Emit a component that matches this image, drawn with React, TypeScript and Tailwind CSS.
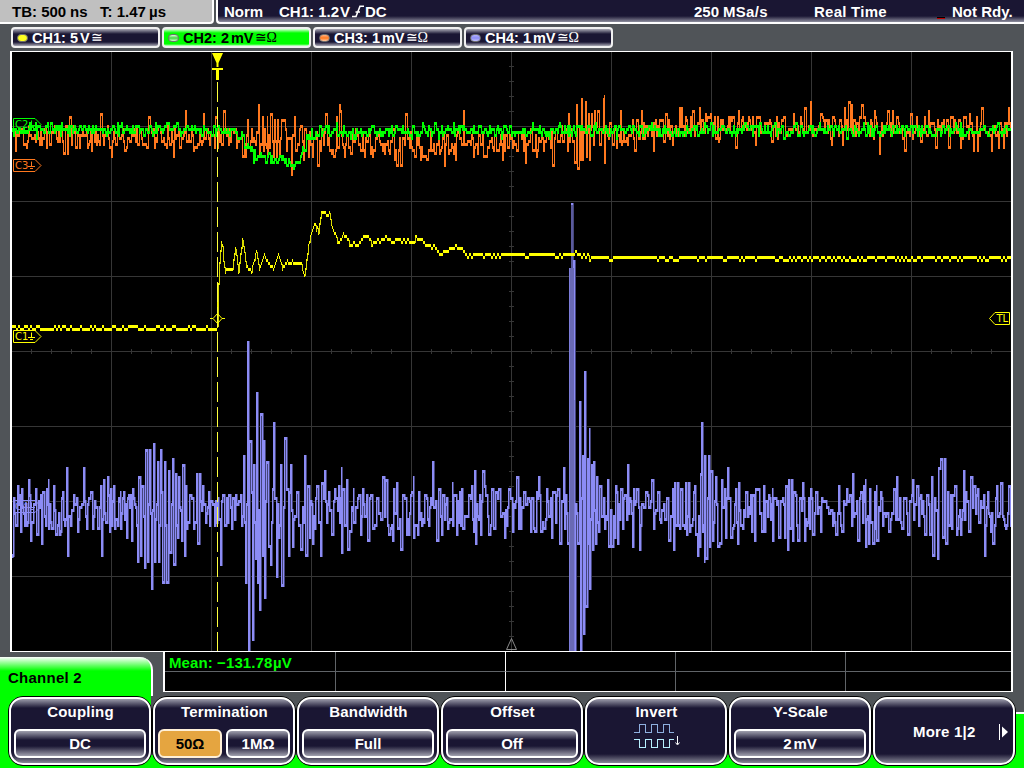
import type { ReactNode } from 'react';

type Pt = [number, number];

const parse = (s: string): Pt[] =>
  s.trim().split(/\s+/).map((p) => p.split(',').map(Number) as Pt);

const random = (seed: number) => {
  let s = seed;
  return () => {
    s = (s * 1664525 + 1013904223) % 4294967296;
    return s / 4294967296;
  };
};

const lerpAt = (pts: Pt[], x: number) => {
  if (x <= pts[0][0]) return pts[0][1];
  for (let i = 1; i < pts.length; i++) {
    if (x <= pts[i][0]) {
      const [x0, y0] = pts[i - 1];
      const [x1, y1] = pts[i];
      return x1 === x0 ? y1 : y0 + ((y1 - y0) * (x - x0)) / (x1 - x0);
    }
  }
  return pts[pts.length - 1][1];
};

/* Fill sparse stretches between measured extremes with noise around a centre line. */
const densify = (pts: Pt[], center: (x: number) => number, amp: number, seed: number) => {
  const rnd = random(seed);
  const out: Pt[] = [];
  pts.forEach((p, i) => {
    out.push(p);
    const next = pts[i + 1];
    if (!next) return;
    for (let x = p[0] + 1 + (rnd() < 0.4 ? 1 : 0); x < next[0]; x += rnd() < 0.65 ? 1 : 2) {
      out.push([x, center(x) + (rnd() * 2 - 1) * amp]);
    }
  });
  return out;
};

/* One vertical bar per sample, spanning from the previous level to the new one. */
const columns = (pts: Pt[]) => {
  let d = '';
  let prev = pts[0][1];
  pts.forEach(([x, y], i) => {
    const q = Math.round(y / 3) * 3;
    d += `M${x + 0.5} ${Math.min(prev, q) - 1}V${Math.max(prev, q) + 2}`;
    const next = pts[i + 1];
    if (next) for (let k = x + 1; k < next[0]; k++) d += `M${k + 0.5} ${q - 1}v3`;
    prev = q;
  });
  return d;
};

const ch4 = parse(`12,556 13,499 15,525 17,487 20,531 21,490 24,525 25,505 26,525 28,481 30,541 31,523 33,505 35,490 36,534 38,502 41,543 42,493
44,516 46,490 48,481 48,528 51,528 53,487 55,535 58,514 59,534 60,530 62,493 64,525 66,469 67,556 70,525 73,496 77,531 79,506 83,469 85,515 86,528 90,493 92,528
95,508 97,528 100,487 101,555 103,481 105,523 107,478 109,531 110,490 113,487 115,520 118,498 120,493 120,528 126,537 128,495 131,541 132,490 134,505 137,561 138,478 140,555 141,487
144,567 145,451 147,561 149,451 151,588 153,445 154,561 157,463 158,561 160,451 162,582 164,463 166,582 168,472 169,552 172,460 173,564 175,475
177,537 178,478 181,540 182,466 184,555 185,487 187,522 189,496 193,528 196,475 197,543 199,475 201,510 202,487 205,522 208,493 209,525 212,504 214,525
217,498 220,564 222,496 224,525 226,498 231,528 235,496 241,525 243,457 245,582 247,343 248,651 249,442 252,639 253,466 255,558 256,394 257,582
259,610 260,415 262,555 263,442 264,598 266,463 268,547 270,564 272,490 273,424 276,577 278,538 280,466 281,585 284,439 286,490 288,555 290,466
292,546 296,493 300,549 304,457 305,555 307,487 309,537 312,543 316,487 320,555 321,484 324,472 326,522 328,493 331,534 334,490 338,487 341,469
341,552 342,490 344,526 346,481 347,549 349,531 353,490 353,522 358,496 360,534 362,490 367,540 371,496 372,528 376,499 380,519 382,478 385,481
388,534 392,540 393,490 396,484 400,549 402,496 406,534 408,534 411,493 413,478 413,537 417,534 418,493 422,519 426,499 428,525 432,463 433,507
436,540 438,490 441,534 446,499 452,484 452,525 455,496 456,534 460,525 461,490 466,517 471,487 473,531 474,472 475,543 480,534 482,472 484,486
488,534 491,490 493,528 498,490 504,537 508,490 512,531 516,478 518,528 524,493 530,531 534,531 536,493 538,478 540,531 543,528 546,490 551,537
552,493 557,490 559,543 563,469 564,528 567,543 569,586 570,269 571,651 571,205 572,651 573,260 574,651 575,505 577,543 579,403 580,651 582,457 583,633
584,373 585,607 587,460 588,543 589,430 589,589 591,466 592,549 593,463 595,543 596,478 598,531 599,487 604,528 607,481 608,546 611,546 614,537
615,487 617,543 620,490 622,528 624,496 627,466 628,513 632,546 633,490 636,490 639,549 645,493 651,481 653,528 657,493 660,522 666,499 668,540
672,490 673,549 674,484 677,484 679,528 680,490 684,528 685,484 686,534 688,484 689,531 694,487 695,534 697,555 699,546 700,475 701,424 702,531
704,562 704,457 705,558 708,457 709,546 710,472 712,540 715,478 717,546 719,543 721,481 724,490 725,537 727,469 730,537 735,490 737,543 738,484
740,525 742,528 748,506 751,531 752,496 754,540 755,490 757,490 761,531 763,487 764,531 768,496 772,490 772,540 778,537 780,500 784,537 785,487
787,549 788,481 789,528 791,481 792,540 793,493 797,540 799,499 802,484 804,540 806,525 810,490 812,534 815,493 820,531 826,506 832,525 835,534
838,487 841,531 846,490 852,475 853,516 857,540 860,493 863,487 865,481 865,546 868,543 869,490 872,543 876,487 876,540 880,493 882,525 888,531
893,490 896,478 897,519 901,528 907,534 909,502 912,481 916,487 918,525 920,496 924,534 929,534 931,478 932,555 934,499 937,558 938,469 940,460
942,537 944,460 945,543 947,493 951,528 954,487 956,535 960,535 963,472 965,493 968,531 970,478 973,487 977,490 978,522 984,555 986,508 990,531
992,543 996,487 1000,484 1004,525 1008,487 1010,525`);

const ch3 = parse(`12,130 15,150 20,130 24,143 40,132 63,152 67,154 69,118 91,150 100,115 111,156 124,150 137,145 146,146 148,118 164,145 173,156 185,112
193,150 203,115 209,145 215,117 223,112 230,140 242,156 245,157 247,120 251,128 255,145 258,106 259,155 262,118 263,150 267,118 267,155 270,115
273,155 274,120 276,155 277,121 279,152 281,121 283,121 286,150 291,174 294,118 295,150 300,125 303,160 308,155 312,157 317,165 322,130 325,115
329,150 333,157 336,118 339,106 340,112 344,156 350,154 355,128 362,135 372,156 384,152 392,130 394,160 396,165 400,166 405,115 410,132 415,155 420,159
426,158 430,128 435,153 440,150 444,165 446,135 455,159 463,112 464,145 473,156 483,155 485,156 493,150 502,160 505,135 516,150 525,162 530,130 536,156 552,165
560,135 567,150 568,114 574,162 576,106 577,169 579,130 580,160 581,100 582,160 585,103 586,155 588,115 589,158 591,115 593,145 594,112 597,112 599,143 603,100 604,97 604,163
605,130 612,145 616,147 620,112 632,121 634,150 641,112 653,150 665,115 672,145 679,109 681,109 692,112 699,109 705,115 710,115 718,141 735,147
738,112 748,118 755,144 771,141 776,118 793,115 804,109 810,103 820,115 831,144 842,145 844,108 848,103 851,106 853,120 861,106 874,112 879,153
887,112 892,112 904,150 910,115 920,141 928,112 935,147 948,147 960,147 969,115 973,150 977,150 981,109 991,150 998,147 1003,147 1008,109 1010,125`);

const ch3Center = parse('12,137 240,137 250,138 290,138 310,140 345,144 420,145 480,142 560,138 610,134 650,131 700,126 1011,127');
const ch2Center = parse(`12,130 150,129 225,130 240,134 248,148 252,156 262,155 267,159 272,162 280,159 290,162 294,166 298,160 302,150 308,138
316,132 340,131 560,130 600,129 700,130 1011,130`);
const ch1Center = parse(`12,327.5 216,327.5 217,326 218,283 219,262 221,241 222,243 223,260 225,270 229,268 232,267 235,247 238,270 242,238 246,265 251,270 256,250 259,267
264,254 268,263 273,267 278,253 282,267 286,262 300,262 302,266 304,276 308,245 311,232 314,223 318,231 321,212 329,213 333,230 338,243 340,240 343,232
349,243 357,244 364,236 367,236 372,244 378,240 386,236 392,243 400,239 411,241 415,236 422,237 425,245 435,246 438,252 447,251 456,246 463,250 467,256
478,254 500,255 510,253 525,255 535,254 550,252 560,255 575,253 590,257.2 700,257 800,257.5 1011,257.5`);

const ch4Path = columns(densify(ch4, () => 510, 18, 7));
const ch3Path = columns(densify(ch3, (x) => lerpAt(ch3Center, x), 11, 21));

const ch2Path = (() => {
  const rnd = random(5);
  const pts: Pt[] = [];
  for (let x = 12; x < 1011; x += rnd() < 0.75 ? 1 : 2) {
    pts.push([x, lerpAt(ch2Center, x) + (rnd() + rnd() - 1) * 8]);
  }
  return columns(pts);
})();

/* Channel 1 is nearly flat: thick level dashes joined by thin risers. */
const ch1Paths = (() => {
  const rnd = random(99);
  let level = '';
  let rise = '';
  let prev = NaN;
  for (let x = 12; x < 1011; ) {
    const flat = x < 215 || x > 285;
    const w = x >= 215 && x < 345 ? 1 : 2;
    const y = Math.floor((lerpAt(ch1Center, x) + (flat ? (rnd() - 0.5) * 3.6 : 0)) / 3) * 3 + 2.5;
    level += `M${x} ${y}h${w}`;
    if (Math.abs(y - prev) > 3) rise += `M${x + 0.5} ${prev}V${y}`;
    prev = y;
    x += w;
  }
  return { level, rise };
})();

const VX = [111, 211, 311, 411, 511, 611, 711, 811, 911];
const HY = [126, 201, 276, 351, 426, 501, 576];

function Marker({ y, label, color }: { y: number; label: string; color: string }) {
  return (
    <g stroke={color} fill="none">
      <path d={`M13.5 ${y - 6}H35L41 ${y}L35 ${y + 6}H13.5Z`} />
      <path d={`M31.5 ${y - 4}V${y + 1}M28 ${y + 1}H35M30 ${y + 3}H33`} />
      <text x="15" y={y + 3.8} fill={color} stroke="none" fontSize="10" fontWeight="400" fontFamily="DejaVu Sans, sans-serif">{label}</text>
    </g>
  );
}

function Plot() {
  return (
    <svg className="block h-[599px] w-[999px]" viewBox="12 52 999 599">
      <g stroke="#363636" shapeRendering="crispEdges">
        {VX.map((x) => <path key={x} d={`M${x + 0.5} 52V651`} />)}
        {HY.map((y) => <path key={y} d={`M12 ${y + 0.5}H1011`} />)}
        {Array.from({ length: 39 }, (_, i) => (
          <path key={i} d={`M509 ${66.5 + i * 15}h5`} />
        ))}
        {Array.from({ length: 49 }, (_, i) => (
          <path key={i} d={`M${31.5 + i * 20} 349v5`} />
        ))}
      </g>
      <path d="M511.5 638.5L506.5 649.5H516.5Z" fill="none" stroke="#8a8a8a" />

      <g shapeRendering="crispEdges" fill="none">
        <path d={ch4Path} stroke="#45457c" transform="translate(1 0)" />
        <path d={ch4Path} stroke="#8c8cf5" />
        <path d="M572 205V270" stroke="#5a5a9c" strokeWidth="2" />
        <path d="M572 268V651" stroke="#6969b4" strokeWidth="4" />
        <path d="M569.5 268V651M574.5 400V651" stroke="#7c7cda" />
      </g>
      <Marker y={506.5} label="C4" color="#8c8cf5" />

      <g shapeRendering="crispEdges" fill="none">
        <path d={ch3Path} stroke="#ff781e" />
        <path d={ch2Path} stroke="#00ff00" />
      </g>
      <Marker y={124.5} label="C2" color="#00ff00" />
      <Marker y={165.5} label="C3" color="#ff781e" />

      <path d={ch1Paths.level} stroke="#ffff00" strokeWidth="3" shapeRendering="crispEdges" />
      <path d={ch1Paths.rise} stroke="#d8d800" shapeRendering="crispEdges" />
      <path d="M217.5 283V327" stroke="#ffff00" />
      <Marker y={336.5} label="C1" color="#ffff00" />

      <path d="M217.5 82V651" stroke="#ffff3c" strokeDasharray="20 5" shapeRendering="crispEdges" />
      <path d="M212 53H223L218.5 63V67H216.5V63Z" fill="#ffff00" />
      <path d="M212 68H223V70H219V80H216V70H212Z" fill="#ffff00" />
      <path d="M217.5 313.5L222 318.5L217.5 323.5L213 318.5ZM210 318.5H213M222 318.5H225" fill="none" stroke="#ffff00" />
      <path d="M989.5 318.5L995 312.5H1009.5V324.5H995Z" fill="none" stroke="#ffff00" />
      <text x="996.5" y="322.3" fill="#ffff00" fontSize="10" fontWeight="400" fontFamily="DejaVu Sans, sans-serif">TL</text>
    </svg>
  );
}

function Tag({ name, value, unit, led, suffix, active }: { name: string; value: string; unit: string; led: string; suffix: string; active?: boolean }) {
  const skin = active
    ? 'text-black bg-[linear-gradient(#d8ffd8,#00ff00_4px,#00ff00_15px,#d8ffd8)]'
    : 'text-white bg-[linear-gradient(#a9a9b5,#1a1633_5px,#1a1633_13px,#a9a9b5)]';
  return (
    <div className={`flex h-[21px] w-[149px] items-center rounded-[4px] border-2 border-[#f0f0f0] pl-[4px] text-[14.5px] leading-none ${skin}`}>
      <span className={`mr-[4px] h-[8px] w-[11px] rounded-full border border-[#707070] ${led}`} />
      <span className="mt-px">{name}:&nbsp;</span>
      <span className="mt-px">{value}</span>
      <span className="mt-px ml-[2px]">{unit}</span>
      <span className="mt-px ml-px text-[14px] font-normal [font-family:'Liberation_Serif',serif]">{suffix}</span>
    </div>
  );
}

function Soft({ title, children }: { title?: string; children?: ReactNode }) {
  return (
    <div className="h-[70px] w-[144px] shrink-0 rounded-[15px] border border-black bg-black">
      <div className="flex h-full flex-col rounded-[14px] border-2 border-white bg-[linear-gradient(#9c9cab,#1a1633_9px,#1a1633_55px,#8a8a99)] px-[3px] pt-[4px] text-center">
        {title && <div className="h-[26px] shrink-0 pl-px leading-[18px] tracking-[0.2px]">{title}</div>}
        {children}
      </div>
    </div>
  );
}

function Value({ children, selected }: { children: ReactNode; selected?: boolean }) {
  return (
    <div
      className={`flex h-[29px] w-full items-center justify-center rounded-[6px] border-2 pb-px leading-none ${
        selected
          ? 'border-[#fff0d8] bg-[#e5a540] text-black'
          : 'border-white bg-[linear-gradient(#a0a0ae,#1a1633_9px,#1a1633_15px,#a0a0ae)]'
      }`}
    >
      {children}
    </div>
  );
}

export default function App() {
  return (
    <div className="flex h-[768px] w-[1024px] flex-col overflow-hidden bg-[#505458] text-[15px] font-bold text-white [font-family:'Liberation_Sans',Arial,sans-serif]">
      <header className="flex h-[24px] gap-[2px] leading-[23px]">
        <div className="flex w-[214px] rounded-br-[4px] border-r-2 border-b-2 border-white bg-[#c0c0c0] pl-[12px] whitespace-nowrap text-black">
          <span className="w-[58px]">TB: 500</span>
          <span className="w-[30px]">ns</span>
          <span className="w-[49px]">T: 1.47</span>
          <span>µs</span>
        </div>
        <div className="flex flex-1 rounded-bl-[4px] border-b-2 border-l-2 border-white bg-[linear-gradient(#1a1633_16px,#9090a0)] pl-[6px] whitespace-nowrap">
          <span className="w-[55px]">Norm</span>
          <span className="w-[61px]">CH1: 1.2</span>
          <span className="w-[12px]">V</span>
          <svg className="mt-[5px] mr-[1px] h-[13px] w-[12px]" viewBox="0 0 12 13" fill="none" stroke="white" strokeWidth="1.6">
            <path d="M0 11.5H4L8 1.2H12M3.5 7H8" />
          </svg>
          <span className="w-[329px]">DC</span>
          <span className="w-[29px]">250</span>
          <span className="w-[91px] tracking-[0.3px]">MSa/s</span>
          <span className="w-[123px] tracking-[0.25px]">Real Time</span>
          <span className="mt-[17px] mr-[7px] h-[2px] w-[8px] border-b border-[#c00000] bg-black" />
          <span>Not Rdy.</span>
        </div>
      </header>

      <div className="flex h-[27px] gap-[2px] pt-[3px] pl-[11px]">
        <Tag name="CH1" value="5" unit="V" suffix="≅" led="bg-[#ffff20]" />
        <Tag name="CH2" value="2" unit="mV" suffix="≅Ω" led="bg-[linear-gradient(#e0ffe0,#40d840,#d0ffd0)]" active />
        <Tag name="CH3" value="1" unit="mV" suffix="≅Ω" led="bg-[linear-gradient(#ffb080,#ff781e,#ffc8a0)]" />
        <Tag name="CH4" value="1" unit="mV" suffix="≅Ω" led="bg-[linear-gradient(#b0b0ff,#8c8cf5,#c0c0ff)]" />
      </div>

      <main className="ml-[10px] h-[601px] w-[1003px] shrink-0 border-x-2 border-y border-white bg-black">
        <Plot />
      </main>

      <section className="flex h-[44px] shrink-0">
        <div className="mt-[5px] mr-[10px] h-[39px] w-[153px] rounded-tr-[13px] border-r-2 border-white bg-[linear-gradient(#ffffff,#00ff00_14px)] pt-[13px] pl-[8px] leading-[16px] tracking-[0.25px] text-black">
          Channel 2
        </div>
        <div className="grid h-[40px] w-[850px] grid-cols-[171px_170px_170px_170px_1fr] grid-rows-[20px_1fr] border-r-2 border-b border-l-2 border-white bg-black leading-[22px]">
          <div className="flex overflow-visible border-r border-b border-[#606468] pl-[4px] whitespace-nowrap text-[#00ff00]">
            <span className="w-[104px] tracking-[0.1px]">Mean: −131.78</span>
            <span>µV</span>
          </div>
          <div className="border-r border-b border-r-white border-b-[#606468]" />
          <div className="border-r border-b border-[#606468]" />
          <div className="border-r border-b border-[#606468]" />
          <div className="border-b border-[#606468]" />
          <div className="border-r border-[#606468]" />
          <div className="border-r border-white" />
          <div className="border-r border-[#606468]" />
          <div className="border-r border-[#606468]" />
          <div />
        </div>
      </section>

      <nav className="flex h-[72px] shrink-0 bg-[linear-gradient(90deg,#00ff00_151px,transparent_151px),linear-gradient(transparent_59px,#00ff00_59px)]">
        <div className="w-[8px] shrink-0" />
        <Soft title="Coupling"><Value>DC</Value></Soft>
        <Soft title="Termination">
          <div className="flex gap-[4px]"><Value selected>50Ω</Value><Value>1MΩ</Value></div>
        </Soft>
        <Soft title="Bandwidth"><Value>Full</Value></Soft>
        <Soft title="Offset"><Value>Off</Value></Soft>
        <Soft title="Invert">
          <svg className="-mt-[6px] ml-[44px] h-[26px] w-[50px] shrink-0" viewBox="0 0 50 26" fill="none">
            <path d="M0 9.5H5.5V1.5H11.5V9.5H17.5V1.5H23.5V9.5H29.5V1.5H35.5V9.5H40" stroke="#8fb0e0" shapeRendering="crispEdges" />
            <path d="M0 16.5H5.5V24.5H11.5V16.5H17.5V24.5H23.5V16.5H29.5V24.5H35.5V16.5H40" stroke="#b8f0ff" shapeRendering="crispEdges" />
            <path d="M43.5 13V21M41.5 19.5L43.5 22L45.5 19.5" stroke="white" />
          </svg>
        </Soft>
        <Soft title="Y-Scale"><Value>2<span className="ml-[2px]">mV</span></Value></Soft>
        <Soft>
          <div className="flex h-[58px] items-center pt-px">
            <span className="ml-[35px] w-[87px] text-left tracking-[0.2px]">More 1|2</span>
            <svg className="-mt-[2px] h-[16px] w-[12px] shrink-0" viewBox="0 0 12 16">
              <path d="M1.5 0V16" stroke="white" />
              <path d="M4 2.5L10 8L4 13.5Z" fill="white" />
            </svg>
          </div>
        </Soft>
        <div className="mt-[16px] flex-1 border-t-2 border-white bg-[#00ff00]" />
      </nav>
    </div>
  );
}
